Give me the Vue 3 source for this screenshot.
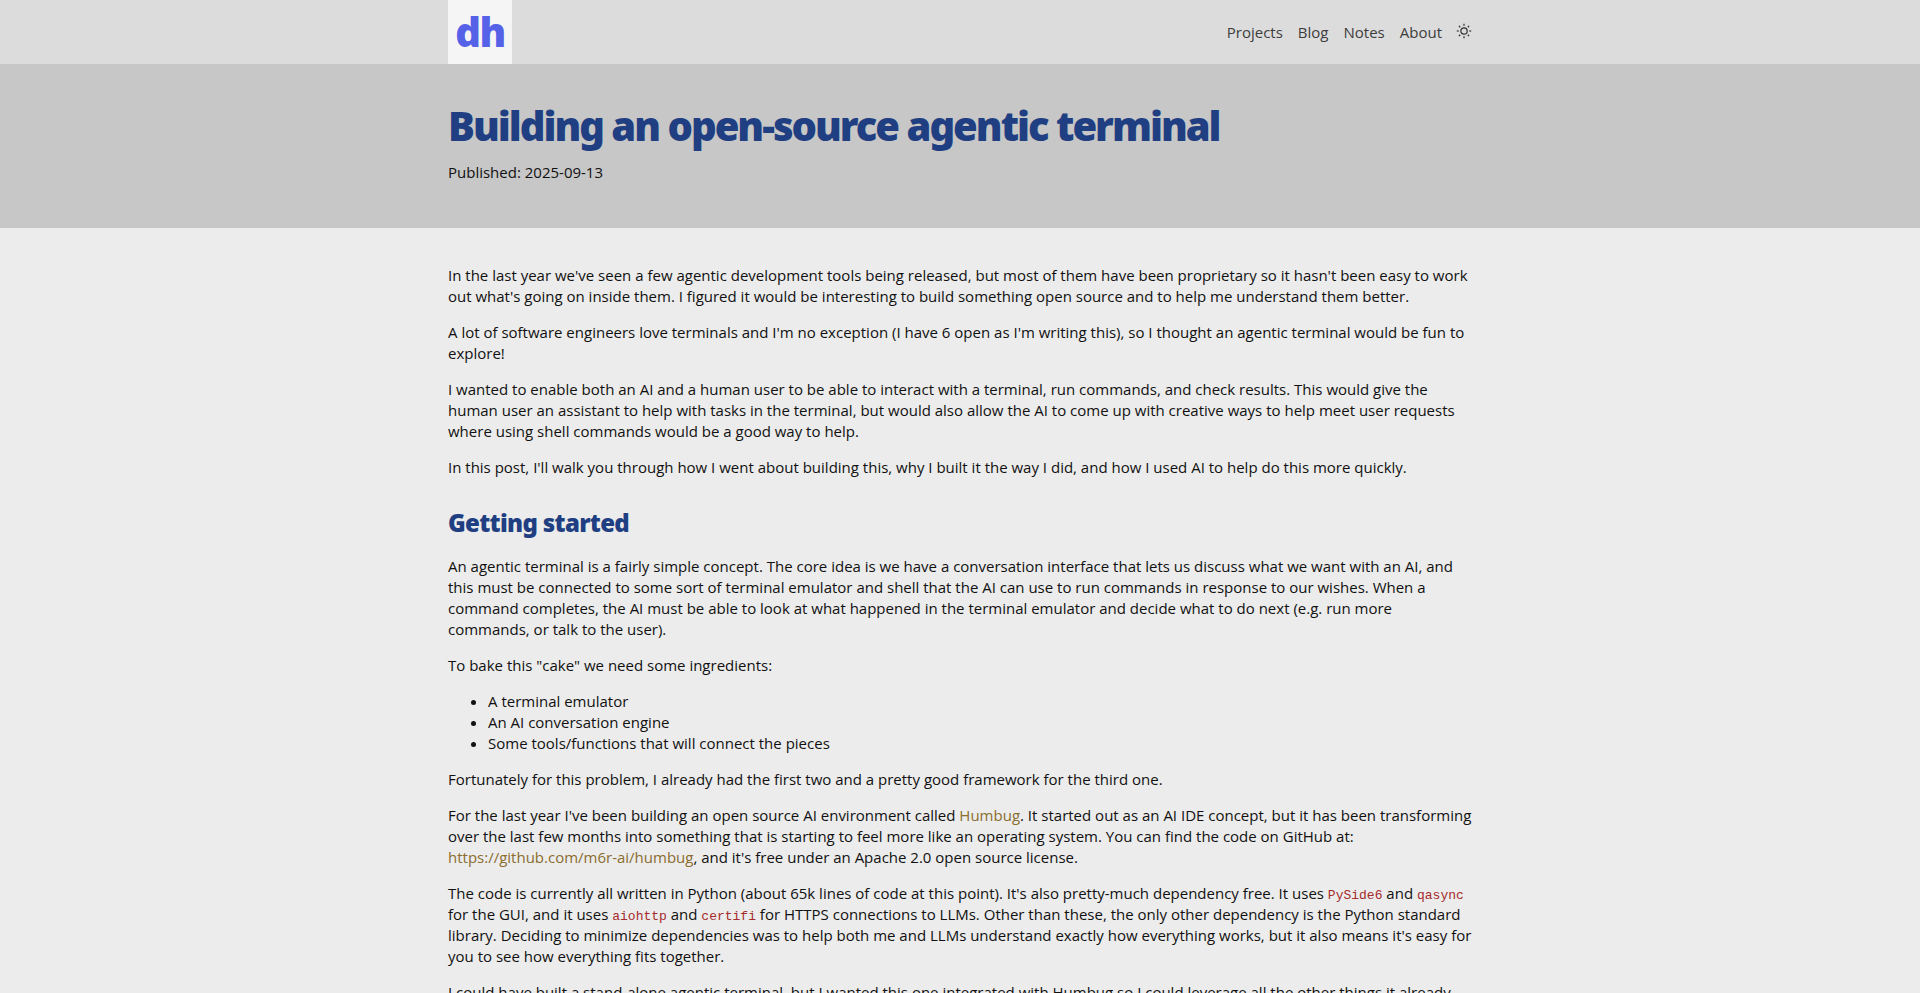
<script setup>
const nav = ['Projects', 'Blog', 'Notes', 'About']
const rays = [0, 45, 90, 135, 180, 225, 270, 315]
</script>

<template>
  <div class="page">
    <header class="top">
      <div class="wrap top-in">
        <a class="logo">dh</a>
        <nav class="nav">
          <a v-for="n in nav" :key="n">{{ n }}</a>
          <svg class="sun" width="16" height="16" viewBox="0 0 16 16" fill="none" stroke="#2f2f2f" stroke-width="1.2">
            <circle cx="8" cy="8" r="3.2" />
            <line v-for="r in rays" :key="r" x1="8" y1="2.7" x2="8" y2="0.8" :transform="`rotate(${r} 8 8)`" />
          </svg>
        </nav>
      </div>
    </header>
    <section class="hero">
      <div class="wrap">
        <h1>Building an open-source agentic terminal</h1>
        <p class="pub">Published: 2025-09-13</p>
      </div>
    </section>
    <main class="wrap body">
      <p>In the last year we've seen a few agentic development tools being released, but most of them have been proprietary so it hasn't been easy to work out what's going on inside them. I figured it would be interesting to build something open source and to help me understand them better.</p>
      <p>A lot of software engineers love terminals and I'm no exception (I have 6 open as I'm writing this), so I thought an agentic terminal would be fun to explore!</p>
      <p>I wanted to enable both an AI and a human user to be able to interact with a terminal, run commands, and check results. This would give the human user an assistant to help with tasks in the terminal, but would also allow the AI to come up with creative ways to help meet user requests where using shell commands would be a good way to help.</p>
      <p>In this post, I'll walk you through how I went about building this, why I built it the way I did, and how I used AI to help do this more quickly.</p>
      <h2>Getting started</h2>
      <p>An agentic terminal is a fairly simple concept. The core idea is we have a conversation interface that lets us discuss what we want with an AI, and this must be connected to some sort of terminal emulator and shell that the AI can use to run commands in response to our wishes. When a command completes, the AI must be able to look at what happened in the terminal emulator and decide what to do next (e.g. run more commands, or talk to the user).</p>
      <p>To bake this "cake" we need some ingredients:</p>
      <ul>
        <li>A terminal emulator</li>
        <li>An AI conversation engine</li>
        <li>Some tools/functions that will connect the pieces</li>
      </ul>
      <p>Fortunately for this problem, I already had the first two and a pretty good framework for the third one.</p>
      <p>For the last year I've been building an open source AI environment called <a>Humbug</a>. It started out as an AI IDE concept, but it has been transforming over the last few months into something that is starting to feel more like an operating system. You can find the code on GitHub at: <a>https://github.com/m6r-ai/humbug</a>, and it's free under an Apache 2.0 open source license.</p>
      <p>The code is currently all written in Python (about 65k lines of code at this point). It's also pretty-much dependency free. It uses <code>PySide6</code> and <code>qasync</code> for the GUI, and it uses <code>aiohttp</code> and <code>certifi</code> for HTTPS connections to LLMs. Other than these, the only other dependency is the Python standard library. Deciding to minimize dependencies was to help both me and LLMs understand exactly how everything works, but it also means it's easy for you to see how everything fits together.</p>
      <p>I could have built a stand-alone agentic terminal, but I wanted this one integrated with Humbug so I could leverage all the other things it already does.</p>
    </main>
  </div>
</template>

<style scoped>
.page {
  height: 993px;
  overflow: hidden;
  background: #ececec;
  color: #111;
  font-family: "Open Sans", sans-serif;
  font-size: 15px;
  line-height: 21px;
}
.wrap {
  width: 1024px;
  margin: 0 auto;
}
.top {
  height: 64px;
  background: #dcdcdc;
}
.top-in {
  display: flex;
  justify-content: space-between;
  align-items: center;
  height: 64px;
}
.logo {
  width: 64px;
  height: 64px;
  background: #f5f5f5;
  color: #5561e6;
  font-family: "Noto Sans", sans-serif;
  font-weight: 900;
  font-size: 40px;
  line-height: 64px;
  text-align: center;
  letter-spacing: -1.5px;
}
.nav {
  display: flex;
  align-items: center;
  gap: 15px;
  color: #3c3c3c;
}
.sun {
  display: block;
  margin: 0 0 2px -1px;
}
.hero {
  height: 164px;
  background: #c7c7c7;
}
h1 {
  margin: 0;
  padding-top: 38px;
  font-family: "Noto Sans", sans-serif;
  font-size: 40px;
  line-height: 48px;
  font-weight: 900;
  letter-spacing: -2px;
  color: #1f3f82;
}
.pub {
  margin: 12px 0 0;
}
.body {
  padding-top: 37px;
}
.body p {
  margin: 0 0 15px;
}
h2 {
  margin: 29px 0 17px;
  font-family: "Noto Sans", sans-serif;
  font-size: 24px;
  line-height: 32px;
  font-weight: 900;
  letter-spacing: -0.67px;
  color: #1f3f82;
}
ul {
  margin: 0 0 15px;
  padding-left: 40px;
}
.body a {
  color: #8a6d2f;
}
code {
  font-family: "Liberation Mono", monospace;
  font-size: 13px;
  line-height: 1;
  color: #a52a2a;
}
</style>
